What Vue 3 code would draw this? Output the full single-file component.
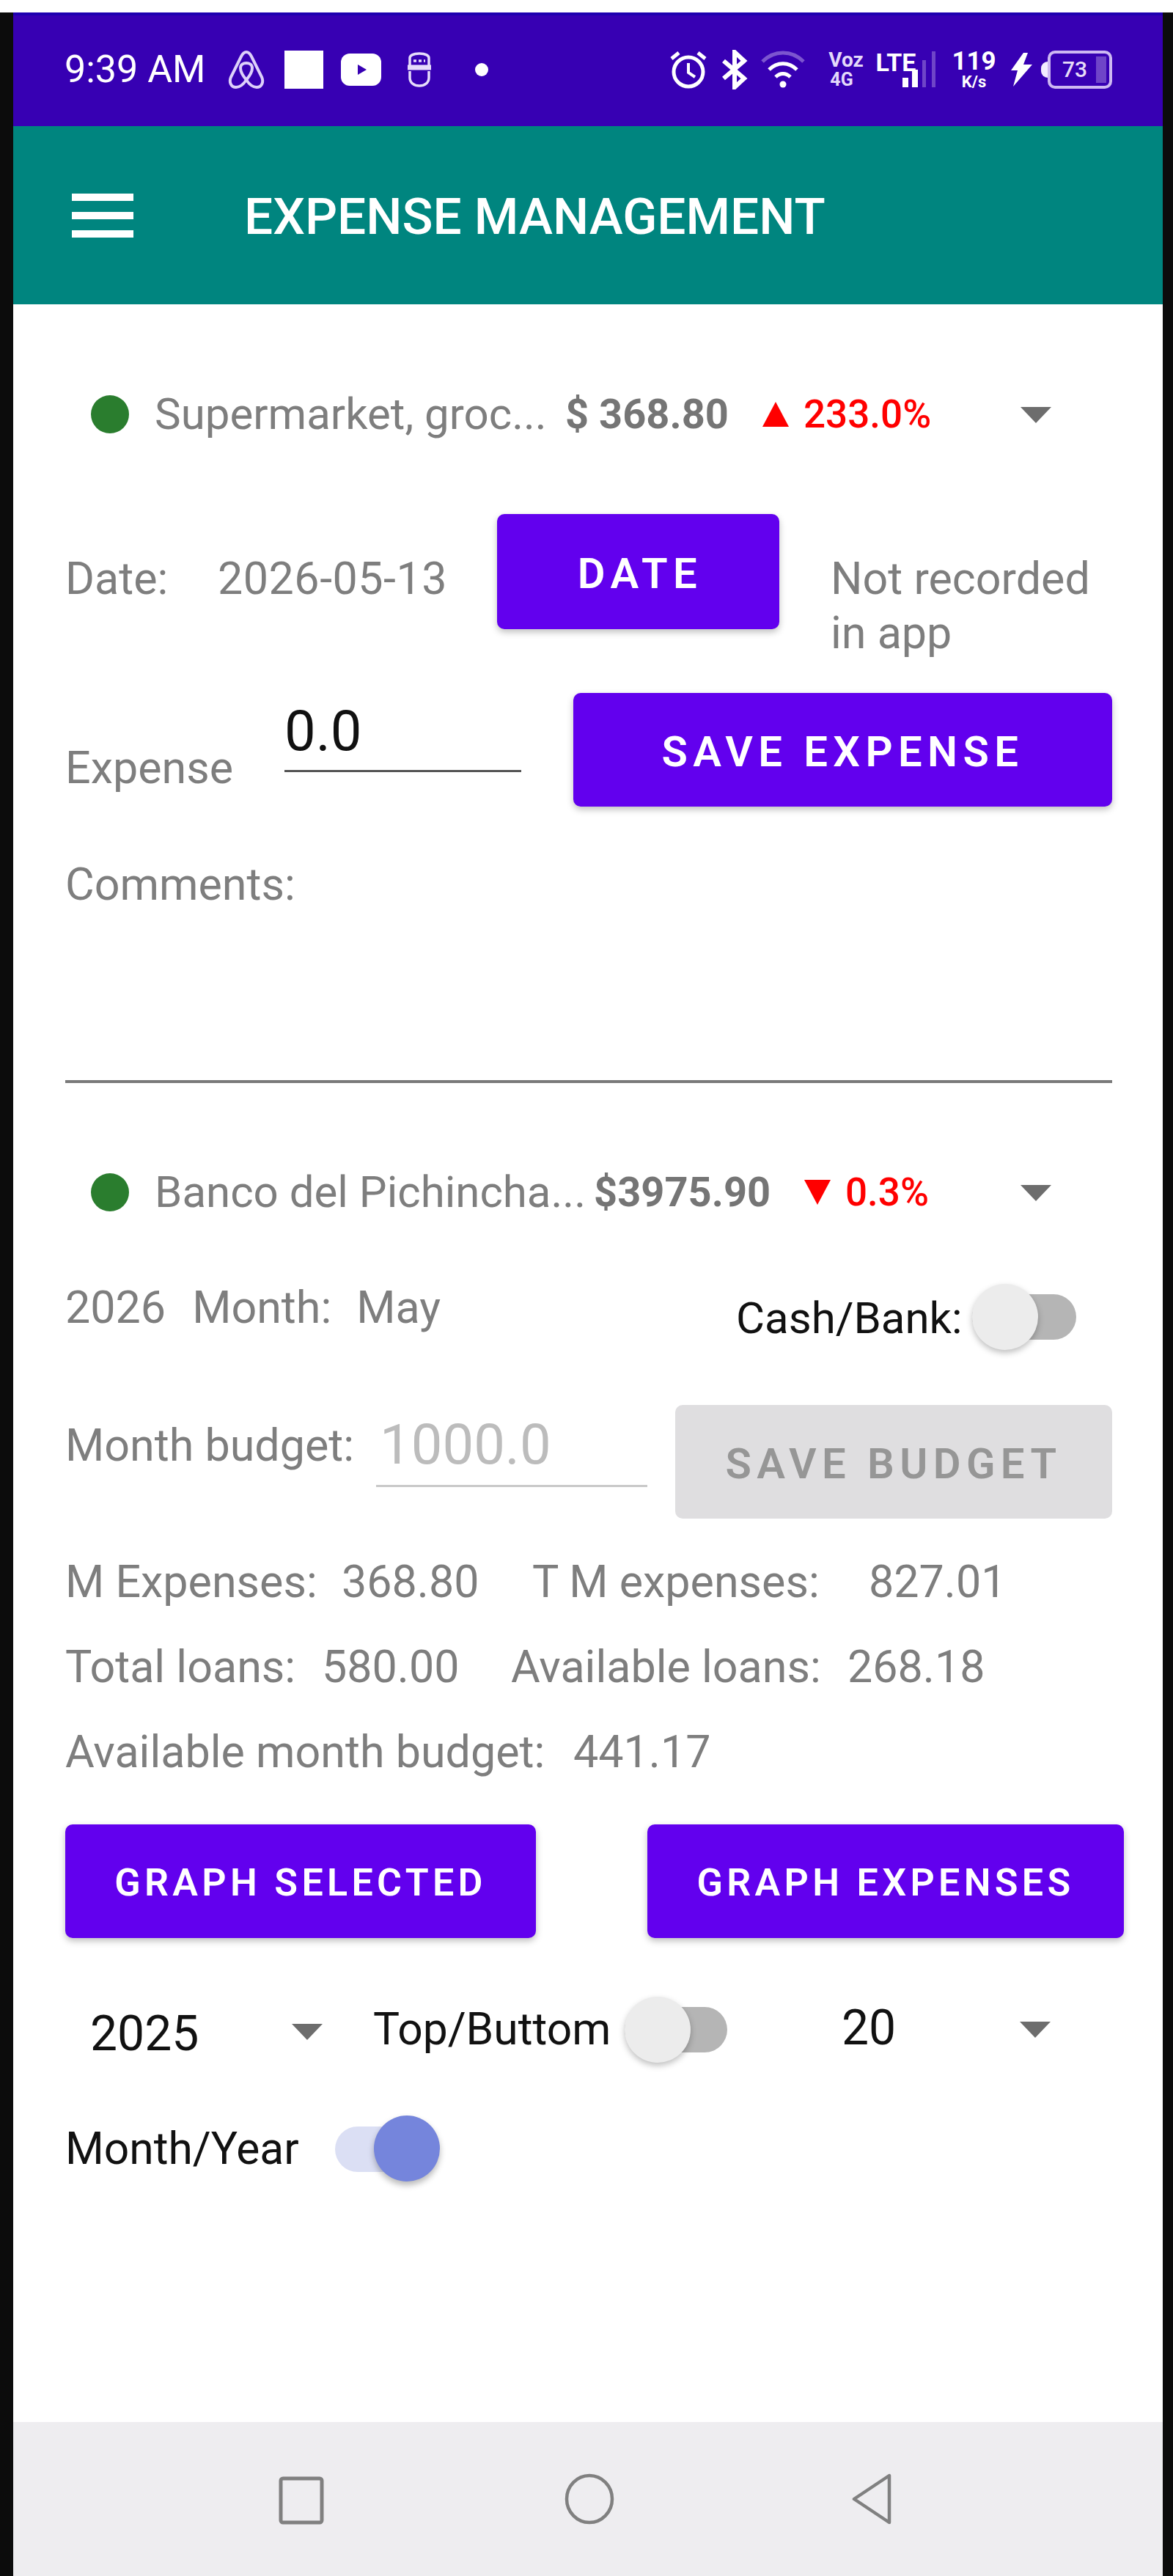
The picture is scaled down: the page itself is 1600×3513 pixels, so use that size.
<template>
  <div class="screen">
    <div class="device">
      <header class="status-bar">
        <span class="clock">9:39 AM</span>
        <svg class="ic-airbnb" viewBox="0 0 52 54" fill="none" stroke="#ddd0fa" stroke-width="4">
          <path d="M26 3c-3 0-5 2-7 6L5 37c-3 7 0 14 7 14 5 0 10-4 14-10 4 6 9 10 14 10 7 0 10-7 7-14L33 9c-2-4-4-6-7-6z" />
          <path d="M26 41c-5-6-8-12-8-16 0-5 4-7 8-7s8 2 8 7c0 4-3 10-8 16z" />
        </svg>
        <span class="ic-square"></span>
        <svg class="ic-youtube" viewBox="0 0 55 44">
          <rect width="55" height="44" rx="12" fill="#fff" />
          <path d="M23 15l12 7-12 7z" fill="#3700b3" />
        </svg>
        <svg class="ic-s" viewBox="0 0 36 48" fill="none" stroke="#e6dcfb" stroke-width="3.5">
          <path d="M5 20V8c0-3 4-6 13-6s13 3 13 6v12" />
          <path d="M10 12h16" stroke-dasharray="4 3" />
          <path d="M2 21h32" stroke-width="7" />
          <path d="M5 26v9c0 7 6 11 13 11s13-4 13-11v-9" />
        </svg>
        <span class="ic-dot"></span>

        <div class="status-right">
          <svg class="ic-alarm" viewBox="0 0 52 54" fill="none" stroke="#fff" stroke-width="5">
            <circle cx="26" cy="30" r="20" />
            <path d="M26 18v13l9 6" stroke-width="4" />
            <path d="M3 12l10-8M49 12L39 4" />
          </svg>
          <svg class="ic-bt" viewBox="0 0 38 54" fill="none" stroke="#fff" stroke-width="6">
            <path d="M4 15l28 24-13 12V3l13 12L4 39" />
          </svg>
          <svg class="ic-wifi" viewBox="0 0 60 52" fill="none" stroke="#fff" stroke-width="5">
            <path d="M2 15C18 -1 42 -1 58 15" stroke="#7c55cf" />
            <path d="M11 26c11-11 27-11 38 0" />
            <path d="M20 36c6-6 14-6 20 0" />
            <circle cx="30" cy="46" r="4.5" fill="#fff" stroke="none" />
          </svg>
          <span class="net-stack voz"><b>Voz</b><i>4G</i></span>
          <span class="net-stack lte"><b>LTE</b></span>
          <svg class="ic-signal" viewBox="0 0 50 52">
            <rect x="0" y="38" width="8" height="13" fill="#fff" />
            <rect x="13" y="27" width="8" height="24" fill="#fff" />
            <rect x="27" y="14" width="5" height="37" fill="#6f45c8" />
            <rect x="40" y="2" width="5" height="49" fill="#6f45c8" />
          </svg>
          <span class="net-stack speed"><b>119</b><i>K/s</i></span>
          <svg class="ic-bolt" viewBox="0 0 34 48">
            <path d="M20 1L3 25h9L6 47l26-30H20l6-16z" fill="#fff" />
          </svg>
          <span class="battery-nub"></span>
          <div class="battery">
            <span class="battery-level">73</span>
            <span class="battery-rest"></span>
          </div>
        </div>
      </header>

      <div class="toolbar">
        <div class="hamburger"><span></span><span></span><span></span></div>
        <h1 class="toolbar-title">EXPENSE MANAGEMENT</h1>
      </div>

      <main class="content">
        <div class="account-row">
          <span class="dot"></span>
          <span class="account-name first">Supermarket, groc...</span>
          <span class="amount first">$ 368.80</span>
          <span class="tri up"></span>
          <span class="pct">233.0%</span>
          <span class="caret"></span>
        </div>

        <div class="date-row">
          <span class="muted date-label">Date:</span>
          <span class="muted date-value">2026-05-13</span>
          <button class="btn date-btn">DATE</button>
          <span class="muted not-recorded">Not recorded in app</span>
        </div>

        <div class="expense-row">
          <span class="muted expense-label">Expense</span>
          <div class="field expense-field">0.0</div>
          <button class="btn save-expense">SAVE EXPENSE</button>
        </div>

        <div class="comments muted">Comments:</div>

        <div class="account-row second">
          <span class="dot"></span>
          <span class="account-name">Banco del Pichincha...</span>
          <span class="amount">$3975.90</span>
          <span class="tri down"></span>
          <span class="pct">0.3%</span>
          <span class="caret"></span>
        </div>

        <div class="period-row">
          <span class="muted">2026</span>
          <span class="muted month-label">Month:</span>
          <span class="muted month-value">May</span>
          <span class="cash-label">Cash/Bank:</span>
          <span class="switch off"><span class="thumb"></span></span>
        </div>

        <div class="budget-row">
          <span class="muted budget-label">Month budget:</span>
          <div class="field budget-field">1000.0</div>
          <button class="btn disabled">SAVE BUDGET</button>
        </div>

        <div v-for="row in stats" :key="row[0].label" class="stat-row">
          <template v-for="item in row" :key="item.label">
            <span class="muted stat-label" :style="{ width: item.width + 'px' }">{{ item.label }}</span>
            <span class="muted stat-value" :style="{ width: item.valueWidth + 'px' }">{{ item.value }}</span>
          </template>
        </div>

        <div class="graph-row">
          <button class="btn graph selected">GRAPH SELECTED</button>
          <button class="btn graph expenses">GRAPH EXPENSES</button>
        </div>

        <div class="filter-row">
          <span class="spin-year">2025</span>
          <span class="caret year-caret"></span>
          <span class="top-label">Top/Buttom</span>
          <span class="switch off top-switch"><span class="thumb"></span></span>
          <span class="spin-count">20</span>
          <span class="caret count-caret"></span>
        </div>

        <div class="month-year-row">
          <span class="my-label">Month/Year</span>
          <span class="switch on"><span class="thumb"></span></span>
        </div>
      </main>

      <nav class="nav-bar">
        <svg class="nav-square" viewBox="0 0 62 66" fill="none" stroke="#808080" stroke-width="5">
          <rect x="3" y="3" width="56" height="60" rx="3" />
        </svg>
        <svg class="nav-circle" viewBox="0 0 68 70" fill="none" stroke="#808080" stroke-width="4.5">
          <ellipse cx="34" cy="35" rx="31" ry="32" />
        </svg>
        <svg class="nav-back" viewBox="0 0 56 70" fill="none" stroke="#808080" stroke-width="4.5" stroke-linejoin="round">
          <path d="M52 3v64L4 35z" />
        </svg>
      </nav>
    </div>
  </div>
</template>

<script setup>
const stats = [
  [
    { label: 'M Expenses:', width: 377, value: '368.80', valueWidth: 260 },
    { label: 'T M expenses:', width: 459, value: '827.01', valueWidth: 200 }
  ],
  [
    { label: 'Total loans:', width: 350, value: '580.00', valueWidth: 258 },
    { label: 'Available loans:', width: 459, value: '268.18', valueWidth: 200 }
  ],
  [
    { label: 'Available month budget:', width: 693, value: '441.17', valueWidth: 200 }
  ]
]
</script>

<style>
html,
body {
  margin: 0;
  background: #fff;
}
</style>

<style scoped>
.screen {
  width: 1600px;
  height: 3513px;
  padding-top: 17px;
  box-sizing: border-box;
  background: #fff;
  font-family: Roboto, "Liberation Sans", sans-serif;
}

.device {
  height: 100%;
  box-sizing: border-box;
  border-left: 18px solid #0c0c0c;
  border-right: 14px solid #0c0c0c;
  display: flex;
  flex-direction: column;
  background: #fff;
}

/* status bar */
.status-bar {
  height: 155px;
  box-sizing: border-box;
  border-top: 4px solid #1f00b0;
  background: #3700b3;
  display: flex;
  align-items: center;
  padding: 0 0 4px 70px;
  color: #fff;
  flex-shrink: 0;
}

.clock {
  font-size: 52px;
  width: 222px;
  white-space: nowrap;
}

.ic-airbnb { width: 52px; height: 54px; }
.ic-square { width: 53px; height: 52px; background: #fff; margin-left: 26px; }
.ic-youtube { width: 55px; height: 44px; margin-left: 24px; }
.ic-s { width: 36px; height: 48px; margin-left: 34px; }
.ic-dot { width: 18px; height: 18px; border-radius: 50%; background: #fff; margin-left: 58px; }

.status-right {
  margin-left: 247px;
  display: flex;
  align-items: center;
  height: 54px;
}

.ic-alarm { width: 52px; height: 54px; }
.ic-bt { width: 38px; height: 54px; margin-left: 18px; }
.ic-wifi { width: 60px; height: 52px; margin-left: 17px; }
.ic-signal { width: 50px; height: 52px; margin-left: -17px; align-self: flex-start; }
.ic-bolt { width: 34px; height: 48px; margin-left: 20px; }

.net-stack {
  display: flex;
  flex-direction: column;
  align-items: center;
  line-height: 1;
  color: #fff;
}

.net-stack b { font-weight: 700; }
.net-stack i { font-style: normal; font-weight: 700; }

.voz { width: 52px; margin-left: 30px; color: #e4d9fa; }
.voz b { font-size: 28px; }
.voz i { font-size: 25px; margin-right: 12px; }

.lte { width: 52px; margin-left: 16px; align-self: flex-start; }
.lte b { font-size: 34px; }

.speed { width: 55px; margin-left: 20px; }
.speed b { font-size: 35px; }
.speed i { font-size: 22px; }

.battery-nub {
  width: 9px;
  height: 22px;
  margin-left: 10px;
  border-radius: 9px 0 0 9px;
  background: #f2ecff;
}

.battery {
  width: 88px;
  height: 52px;
  box-sizing: border-box;
  border: 4px solid #cdb8f2;
  border-radius: 10px;
  padding: 4px;
  display: flex;
}

.battery-level {
  flex: 1;
  color: #e6dcf8;
  font-size: 30px;
  font-weight: 500;
  line-height: 36px;
  text-align: center;
}

.battery-rest {
  width: 14px;
  background: #6f45c8;
}

/* toolbar */
.toolbar {
  height: 243px;
  background: #00857f;
  display: flex;
  align-items: center;
  padding-left: 80px;
  flex-shrink: 0;
}

.hamburger {
  width: 84px;
  display: flex;
  flex-direction: column;
  gap: 15px;
}

.hamburger span {
  height: 10px;
  background: #fff;
}

.toolbar-title {
  margin: 4px 0 0 151px;
  color: #fff;
  font-size: 69.3px;
  font-weight: 500;
  white-space: nowrap;
}

/* content */
.content {
  flex: 1;
  min-height: 0;
  color: #7b7b7b;
  font-size: 61px;
  line-height: 74px;
}

.muted {
  color: #7e7e7e;
}

.account-row {
  height: 100px;
  margin-top: 100px;
  padding-left: 106px;
  display: flex;
  align-items: center;
  position: relative;
}

.account-row.second {
  margin-top: 99px;
}

.dot {
  width: 52px;
  height: 52px;
  border-radius: 50%;
  background: #2a7d2e;
  flex-shrink: 0;
}

.account-name {
  width: 599px;
  margin-left: 35px;
  white-space: nowrap;
  font-size: 60px;
  color: #7e7e7e;
}

.account-name.first {
  width: 560px;
}

.amount {
  width: 287px;
  white-space: nowrap;
  font-size: 56px;
  font-weight: 700;
  color: #757575;
}

.amount.first {
  width: 269px;
}

.tri {
  width: 0;
  height: 0;
  border-left: 18px solid transparent;
  border-right: 18px solid transparent;
}

.tri.up { border-bottom: 34px solid #f00; }
.tri.down { border-top: 34px solid #f00; }

.pct {
  margin-left: 20px;
  color: #f00;
  font-size: 53px;
  font-weight: 500;
}

.caret {
  position: absolute;
  right: 152px;
  top: 40px;
  width: 0;
  height: 0;
  border-left: 21px solid transparent;
  border-right: 21px solid transparent;
  border-top: 22px solid #6d6d6d;
}

.btn {
  display: block;
  border: 0;
  border-radius: 10px;
  background: #6200ee;
  color: #fff;
  font-family: inherit;
  font-size: 58px;
  font-weight: 600;
  letter-spacing: 7.4px;
  height: 155px;
  padding: 4px 0 0;
  box-shadow: 0 4px 10px rgba(0, 0, 0, 0.25);
  white-space: nowrap;
}

.date-row {
  height: 199px;
  margin-top: 86px;
  padding-left: 71px;
  display: flex;
  align-items: flex-start;
}

.date-label,
.date-value {
  margin-top: 51px;
}

.date-label { width: 208px; }
.date-value { width: 381px; white-space: nowrap; letter-spacing: 0.5px; }

.date-btn {
  width: 385px;
  height: 157px;
  padding-left: 5px;
}

.not-recorded {
  width: 400px;
  margin: 51px 0 0 70px;
}

.expense-row {
  height: 155px;
  margin-top: 45px;
  padding-left: 71px;
  display: flex;
  position: relative;
}

.expense-label {
  margin-top: 65px;
  width: 299px;
}

.field {
  box-sizing: border-box;
  color: #111;
  font-size: 76px;
  line-height: 84px;
}

.expense-field {
  width: 323px;
  height: 108px;
  border-bottom: 3px solid #555;
  padding: 10px 0 0;
}

.save-expense {
  width: 735px;
  margin-left: 71px;
}

.comments {
  height: 308px;
  box-sizing: border-box;
  margin: 69px 69px 0 71px;
  border-bottom: 4px solid #7a7a7a;
}

.period-row {
  height: 110px;
  margin-top: 63px;
  padding-left: 71px;
  display: flex;
  align-items: flex-start;
  position: relative;
}

.period-row .muted {
  margin-top: 7px;
}

.month-label { margin-left: 36px; }
.month-value { margin-left: 34px; }

.cash-label {
  position: absolute;
  left: 986px;
  top: 22px;
  color: #111;
  font-size: 60px;
  white-space: nowrap;
}

.switch {
  position: absolute;
  display: block;
  width: 140px;
  height: 62px;
  border-radius: 31px;
  background: #b5b5b5;
}

.thumb {
  position: absolute;
  top: -14px;
  left: 0;
  width: 90px;
  height: 90px;
  border-radius: 50%;
  background: #ececec;
  box-shadow: 0 4px 8px rgba(0, 0, 0, 0.25);
}

.period-row .switch {
  left: 1308px;
  top: 26px;
  width: 142px;
}

.budget-row {
  height: 156px;
  margin-top: 67px;
  padding-left: 71px;
  display: flex;
  position: relative;
}

.budget-label {
  width: 424px;
  margin-top: 18px;
  white-space: nowrap;
}

.budget-field {
  width: 370px;
  height: 112px;
  border-bottom: 3px solid #c9c9c9;
  color: #bcbcbc;
  padding: 12px 0 0 5px;
}

.btn.disabled {
  width: 596px;
  margin-left: 38px;
  background: #dfdee0;
  color: #969696;
  box-shadow: none;
}

.stat-row {
  height: 74px;
  margin-top: 42px;
  padding-left: 71px;
  display: flex;
  white-space: nowrap;
}

.stat-label,
.stat-value {
  display: block;
  flex-shrink: 0;
}

.budget-row + .stat-row {
  margin-top: 48px;
}

.graph-row {
  height: 155px;
  margin-top: 62px;
  padding-left: 71px;
  display: flex;
}

.btn.graph {
  font-size: 52px;
  letter-spacing: 5.3px;
}

.graph.selected { width: 642px; }
.graph.expenses { width: 650px; margin-left: 152px; }

.filter-row {
  height: 110px;
  margin-top: 72px;
  position: relative;
  color: #111;
}

.spin-year,
.spin-count,
.top-label,
.year-caret,
.count-caret {
  position: absolute;
}

.spin-year {
  left: 105px;
  top: 22px;
  font-size: 66px;
}

.year-caret {
  left: 380px;
  right: auto;
  top: 45px;
}

.top-label {
  left: 491px;
  top: 16px;
  font-size: 60.5px;
  white-space: nowrap;
}

.top-switch {
  left: 834px;
  top: 22px;
}

.spin-count {
  left: 1130px;
  top: 14px;
  font-size: 66px;
}

.count-caret {
  left: 1373px;
  right: auto;
  top: 42px;
}

.month-year-row {
  height: 90px;
  margin-top: 60px;
  position: relative;
  padding-left: 71px;
  color: #111;
  font-size: 60.5px;
  line-height: 92px;
}

.switch.on {
  left: 439px;
  top: 15px;
  background: #dbdff4;
}

.switch.on .thumb {
  left: 53px;
  top: -15px;
  background: #7585dc;
  box-shadow: 0 5px 8px rgba(0, 0, 0, 0.28);
}

/* nav */
.nav-bar {
  height: 210px;
  background: #eeedf0;
  display: flex;
  align-items: flex-start;
  flex-shrink: 0;
  padding-top: 70px;
  box-sizing: border-box;
}

.nav-square { width: 62px; height: 66px; margin: 4px 0 0 362px; }
.nav-circle { width: 68px; height: 70px; margin-left: 328px; }
.nav-back { width: 56px; height: 70px; margin-left: 323px; }
</style>
